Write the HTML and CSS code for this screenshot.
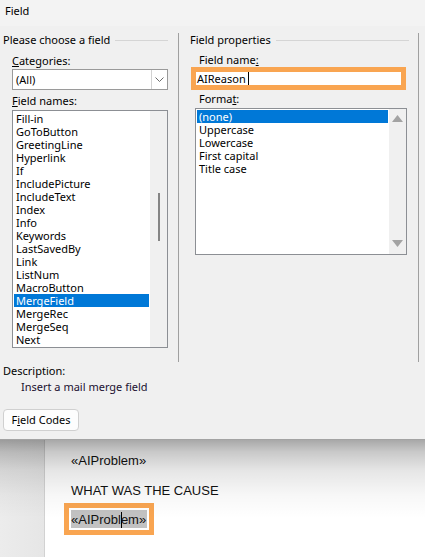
FILE: index.html
```html
<!DOCTYPE html>
<html lang="en">
<head>
<meta charset="utf-8">
<title>Field</title>
<link rel="stylesheet" href="styles.css">
</head>
<body>
<div class="dialog">
  <div class="titlebar">Field</div>
  <div class="panes">
    <div class="pane-left">
      <div class="group-label"><span>Please choose a field</span></div>
      <div class="group-body">
        <div class="label label-first"><u>C</u>ategories:</div>
        <div class="combo">
          <span class="combo-value">(All)</span>
          <span class="combo-btn">
            <svg width="9" height="5" viewBox="0 0 9 5"><path d="M0.5 0.5 L4.5 4.5 L8.5 0.5" fill="none" stroke="#6b6b6b" stroke-width="1"/></svg>
          </span>
        </div>
        <div class="label label-gap"><u>F</u>ield names:</div>
        <div class="listbox names">
          <ul class="items">
            <li>Fill-in</li>
            <li>GoToButton</li>
            <li>GreetingLine</li>
            <li>Hyperlink</li>
            <li>If</li>
            <li>IncludePicture</li>
            <li>IncludeText</li>
            <li>Index</li>
            <li>Info</li>
            <li>Keywords</li>
            <li>LastSavedBy</li>
            <li>Link</li>
            <li>ListNum</li>
            <li>MacroButton</li>
            <li class="selected">MergeField</li>
            <li>MergeRec</li>
            <li>MergeSeq</li>
            <li>Next</li>
          </ul>
          <div class="vscroll names-scroll"><div class="thumb"></div></div>
        </div>
      </div>
    </div>
    <div class="pane-right">
      <div class="group-label"><span>Field properties</span></div>
      <div class="group-body-right">
        <div class="label label-first">Field name<u>:</u></div>
        <div class="mark-box field-mark">
          <div class="textbox">AIReason<span class="caret"></span></div>
        </div>
        <div class="label label-format">Forma<u>t</u>:</div>
        <div class="listbox formats">
          <ul class="items">
            <li class="selected">(none)</li>
            <li>Uppercase</li>
            <li>Lowercase</li>
            <li>First capital</li>
            <li>Title case</li>
          </ul>
          <div class="vscroll arrows">
            <svg width="11" height="7" viewBox="0 0 11 7"><path d="M0 7 L5.5 0 L11 7 Z" fill="#a3a3a3"/></svg>
            <svg width="11" height="7" viewBox="0 0 11 7"><path d="M0 0 L5.5 7 L11 0 Z" fill="#a3a3a3"/></svg>
          </div>
        </div>
      </div>
    </div>
  </div>
  <div class="description">
    <div class="desc-label">Description:</div>
    <div class="desc-text">Insert a mail merge field</div>
  </div>
  <div class="footer">
    <button class="btn" type="button">F<u>i</u>eld Codes</button>
  </div>
</div>
<div class="document">
  <div class="gutter"></div>
  <div class="page">
    <div class="doc-line first">«AIProblem»</div>
    <div class="doc-line second">WHAT WAS THE CAUSE</div>
    <div class="doc-mark">
      <span class="doc-sel">«AIProbl<span class="doc-caret"></span>em»</span>
    </div>
  </div>
  <div class="shadow"></div>
</div>
</body>
</html>
```

FILE: styles.css
```css
* {
  box-sizing: border-box;
}

html, body {
  margin: 0;
  padding: 0;
}

body {
  width: 425px;
  height: 557px;
  overflow: hidden;
  background: #ffffff;
  font-family: "Noto Sans", "DejaVu Sans", sans-serif;
  font-size: 11px;
  color: #000000;
}

u {
  text-decoration: underline;
  text-underline-offset: 1px;
}

.dialog {
  height: 440px;
  background: #f0f0f0;
  border-bottom: 1px solid #a3a3a3;
  display: flex;
  flex-direction: column;
}

.titlebar {
  height: 26px;
  background: #f3f3f3;
  padding: 3px 0 0 5px;
  line-height: 16px;
  color: #000;
}

.panes {
  margin-top: 7px;
  height: 329px;
  display: flex;
}

.pane-left {
  width: 178px;
  padding: 0 10px 0 3px;
}

.pane-right {
  width: 241px;
  border-left: 1px solid #a0a0a0;
  border-right: 1px solid #a0a0a0;
  padding: 0 9px 0 11px;
}

.group-label {
  display: flex;
  align-items: center;
  height: 14px;
  line-height: 14px;
  white-space: nowrap;
}

.group-label::after {
  content: "";
  flex: 1;
  height: 1px;
  background: #d5d5d5;
  margin-left: 5px;
}

.group-body {
  padding-left: 9px;
}

.group-body-right {
  padding-left: 5px;
}

.label {
  height: 14px;
  line-height: 14px;
  white-space: nowrap;
}

.group-body .label-first {
  margin-top: 7px;
}

.group-body-right .label-first {
  margin-top: 6px;
  padding-left: 4px;
}

.label-gap {
  margin-top: 4px;
}

.label-format {
  margin-top: 2px;
  padding-left: 4px;
}

.combo {
  margin-top: 1px;
  height: 21px;
  width: 156px;
  background: #ffffff;
  border: 1px solid #9a9a9a;
  display: flex;
  align-items: stretch;
}

.combo-value {
  flex: 1;
  padding-left: 3px;
  line-height: 19px;
}

.combo-btn {
  width: 16px;
  border-left: 1px solid #d2d2d2;
  display: flex;
  align-items: center;
  justify-content: center;
  background: #ffffff;
}

.listbox {
  margin-top: 2px;
  background: #ffffff;
  border: 1px solid #8c8f94;
  display: flex;
}

.listbox.names {
  width: 156px;
  height: 238px;
}

.listbox.formats {
  width: 212px;
  height: 147px;
}

.items {
  list-style: none;
  margin: 0;
  padding: 1px;
  flex: 1;
}

.items li {
  height: 13px;
  line-height: 13px;
  padding-left: 2px;
  white-space: nowrap;
}

.items li.selected {
  background: #0078d7;
  color: #ffffff;
}

.vscroll {
  width: 17px;
  background: #f0f0f0;
}

.names-scroll {
  display: flex;
  justify-content: center;
  padding-top: 82px;
}

.thumb {
  width: 2px;
  height: 48px;
  background: #858585;
}

.arrows {
  display: flex;
  flex-direction: column;
  justify-content: space-between;
  align-items: center;
  padding: 6px 0 7px;
}

.mark-box {
  border: 5px solid #f9a551;
  background: #ffffff;
}

.field-mark {
  width: 215px;
  height: 23px;
  margin-left: -4px;
}

.textbox {
  height: 13px;
  line-height: 13px;
  padding-left: 1px;
  white-space: nowrap;
}

.caret {
  display: inline-block;
  width: 0;
  height: 13px;
  border-left: 1px solid #000;
  vertical-align: top;
  margin-left: 2px;
}

.description {
  margin-top: 2px;
  padding-left: 3px;
}

.desc-label {
  height: 14px;
  line-height: 14px;
}

.desc-text {
  margin-top: 2px;
  height: 14px;
  line-height: 14px;
  padding-left: 18px;
  color: #1b1030;
}

.footer {
  margin-top: 15px;
  padding-left: 3px;
}

.btn {
  width: 76px;
  height: 22px;
  padding: 0;
  margin: 0;
  font-family: inherit;
  font-size: 11px;
  line-height: 20px;
  color: #000;
  background: #fdfdfd;
  border: 1px solid #d0d0d0;
  border-radius: 4px;
  text-align: center;
}

.document {
  position: relative;
  height: 117px;
  display: flex;
  background: #ffffff;
}

.gutter {
  width: 45px;
  background: linear-gradient(to right, #ececec, #e6e6e6);
  border-right: 1px solid #d2d2d2;
}

.page {
  flex: 1;
  padding: 13px 0 0 26px;
  font-family: "Liberation Sans", Arial, sans-serif;
  font-size: 13px;
  color: #111;
}

.doc-line {
  height: 16px;
  line-height: 16px;
  white-space: nowrap;
}

.doc-line.second {
  margin-top: 14px;
}

.doc-mark {
  display: inline-block;
  margin-top: 4px;
  margin-left: -7px;
  border: 5px solid #f9a551;
  background: #ffffff;
  padding: 2px;
}

.doc-sel {
  display: block;
  background: #c2c2c2;
  height: 18px;
  line-height: 16px;
  padding: 2px 1px 0 0;
  white-space: nowrap;
}

.doc-caret {
  display: inline-block;
  width: 0;
  height: 16px;
  border-left: 1px solid #000;
  margin-right: -1px;
  vertical-align: top;
}

.shadow {
  position: absolute;
  left: 0;
  top: 0;
  right: 0;
  height: 78px;
  pointer-events: none;
  background: linear-gradient(to bottom,
    rgba(0, 0, 0, 0.34) 0px,
    rgba(0, 0, 0, 0.21) 12px,
    rgba(0, 0, 0, 0.1) 30px,
    rgba(0, 0, 0, 0.03) 55px,
    rgba(0, 0, 0, 0) 78px);
}
```
